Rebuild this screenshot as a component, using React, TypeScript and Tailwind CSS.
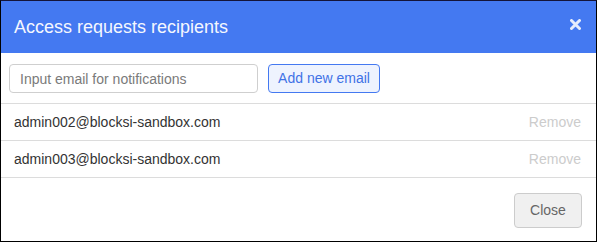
export default function App() {
  const emails = ['admin002@blocksi-sandbox.com', 'admin003@blocksi-sandbox.com'];

  return (
    <div className="w-[597px] h-[242px] bg-white border border-black border-t-[#14143a] flex flex-col font-['Liberation_Sans',Arial,sans-serif] overflow-hidden">
      {/* Header */}
      <div className="h-[52px] bg-[#4479f1] flex items-center justify-between pl-[13px] pr-[15px] shrink-0">
        <h1 className="text-[18px] text-[#f4f7fe] leading-none">Access requests recipients</h1>
        <svg width="11" height="11" viewBox="0 0 11 11" className="mt-[-6px]">
          <path d="M1.5 1.5 L9.5 9.5 M9.5 1.5 L1.5 9.5" stroke="#e6ecfc" strokeWidth="3" strokeLinecap="round" />
        </svg>
      </div>

      {/* Input row */}
      <div className="flex items-center gap-[10px] pl-[8px] pt-[11px] pb-[10px] border-b border-[#dcdcdc]">
        <input
          placeholder="Input email for notifications"
          className="w-[249px] h-[29px] border border-[#cfcfcf] rounded-[4px] px-[10px] text-[14px] placeholder:text-[#7a7a7a] outline-none"
        />
        <button className="w-[112px] h-[29px] border border-[#4479f1] bg-[#eef3fe] rounded-[4px] text-[14px] text-[#3f72e6]">
          Add new email
        </button>
      </div>

      {/* Recipients */}
      {emails.map((e) => (
        <div key={e} className="h-[37px] flex items-center justify-between pl-[13px] pr-[15px] border-b border-[#dcdcdc] text-[14px]">
          <span className="text-[#333333]">{e}</span>
          <span className="text-[#cccccc]">Remove</span>
        </div>
      ))}

      {/* Footer */}
      <div className="flex justify-end pt-[15px] pr-[14px]">
        <button className="w-[68px] h-[35px] bg-[#f0f0f0] border border-[#cccccc] rounded-[4px] text-[14px] text-[#666666]">
          Close
        </button>
      </div>
    </div>
  );
}
